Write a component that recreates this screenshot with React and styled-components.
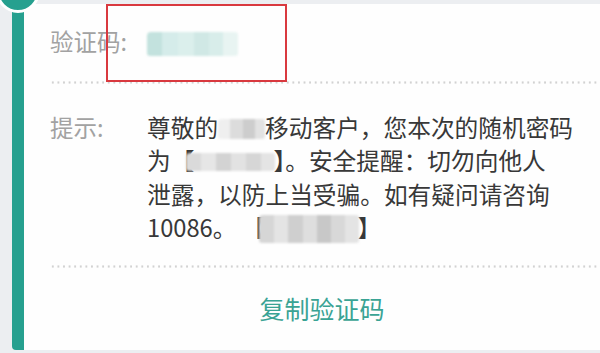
import React from 'react';
import styled, { createGlobalStyle } from 'styled-components';

const GlobalStyle = createGlobalStyle`
  html, body {
    margin: 0;
    padding: 0;
    background: #eceef1;
    overflow: hidden;
  }
  body {
    font-family: "Noto Sans CJK SC", "Noto Sans", sans-serif;
  }
`;

const Page = styled.div`
  position: relative;
  width: 600px;
  height: 353px;
  padding: 4px 0 0 12px;
  box-sizing: border-box;
  overflow: hidden;
`;

const Card = styled.div`
  position: relative;
  height: 346px;
  background: #fefefe;
  border-left: 12px solid #26a08f;
  border-bottom-left-radius: 4px;
  box-sizing: border-box;
`;

const Dot = styled.div`
  position: absolute;
  left: -28px;
  top: -35px;
  width: 38px;
  height: 38px;
  border-radius: 50%;
  background: #26a08f;
  border: 3px solid #fff;
`;

// dotted separator drawn under each section
const Row = styled.div`
  margin-left: 26px;
  display: flex;
  box-sizing: border-box;
  background: radial-gradient(circle, #d2d2d2 0.9px, transparent 1.4px) left bottom / 5.6px 3px repeat-x;
`;

const CodeRow = styled(Row)`
  height: 80px;
  align-items: center;
  padding-bottom: 4px;
`;

const HintRow = styled(Row)`
  height: 184px;
  padding-top: 27px;
`;

const Label = styled.div`
  width: 97px;
  flex-shrink: 0;
  font-size: 23.5px;
  line-height: 33.3px;
  color: #a2a2a2;
  white-space: nowrap;
`;

const Message = styled.div`
  font-size: 23.7px;
  line-height: 33.3px;
  color: #383838;
  white-space: nowrap;
`;

const Mosaic = styled.span`
  display: inline-flex;
  vertical-align: middle;
  height: ${p => p.$h}px;
  margin: ${p => p.$m};
  filter: blur(1.3px);
  border-radius: 4px 3px 3px 3px;
  overflow: hidden;
`;

const Cell = styled.span`
  display: block;
  width: ${p => p.$w}px;
  height: 100%;
`;

const ButtonRow = styled.div`
  margin-left: 26px;
  height: 82px;
  display: flex;
  align-items: center;
  justify-content: center;
  padding-right: 6px;
  padding-bottom: 2px;
  box-sizing: border-box;
`;

const CopyButton = styled.button`
  border: none;
  background: none;
  padding: 0;
  font-family: inherit;
  font-size: 25px;
  color: #3aa394;
  cursor: pointer;
`;

const Highlight = styled.div`
  position: absolute;
  left: 106px;
  top: 4px;
  width: 181px;
  height: 78px;
  border: 2px solid #d9393f;
  box-sizing: border-box;
`;

const Blur = ({ cells, h, m }) => (
  <Mosaic $h={h} $m={m}>
    {cells.map(([w, c], i) => (
      <Cell key={i} $w={w} style={{ background: c }} />
    ))}
  </Mosaic>
);

const codeCells = [
  [15, '#c3e2de'], [16, '#d5ecea'], [16, '#dbefec'], [15, '#d0e8e5'], [14, '#d8edea'], [15, '#e8f4f2'],
];
const nameCells = [[12, '#efefef'], [13, '#dcdcdc'], [12, '#cdcdcd'], [10, '#e2e2e2']];
const pwdCells = [
  [15, '#dadada'], [15, '#e6e6e6'], [15, '#d3d3d3'], [15, '#e2e2e2'], [15, '#d6d6d6'], [14, '#e4e4e4'],
];
const signCells = [
  [15, '#d6d6d6'], [14, '#e4e4e4'], [15, '#cfcfcf'], [14, '#dedede'], [14, '#c8c8c8'], [14, '#d8d8d8'], [14, '#e4e4e4'],
];

export default function App() {
  return (
    <>
      <GlobalStyle />
      <Page>
        <Card>
          <Dot />
          <CodeRow>
            <Label>验证码:</Label>
            <Blur cells={codeCells} h={24} m="4px 0 0 0" />
          </CodeRow>
          <HintRow>
            <Label>提示:</Label>
            <Message>
              尊敬的<Blur cells={nameCells} h={20} m="-3px 0 0 0" />移动客户，您本次的随机密码
              <br />
              为【<Blur cells={pwdCells} h={18} m="-3px -2px 0 -8px" />】。安全提醒：切勿向他人
              <br />
              泄露，以防上当受骗。如有疑问请咨询
              <br />
              10086。 【<Blur cells={signCells} h={28} m="-2px -2px 0 -6px" />】
            </Message>
          </HintRow>
          <ButtonRow>
            <CopyButton>复制验证码</CopyButton>
          </ButtonRow>
        </Card>
        <Highlight />
      </Page>
    </>
  );
}
